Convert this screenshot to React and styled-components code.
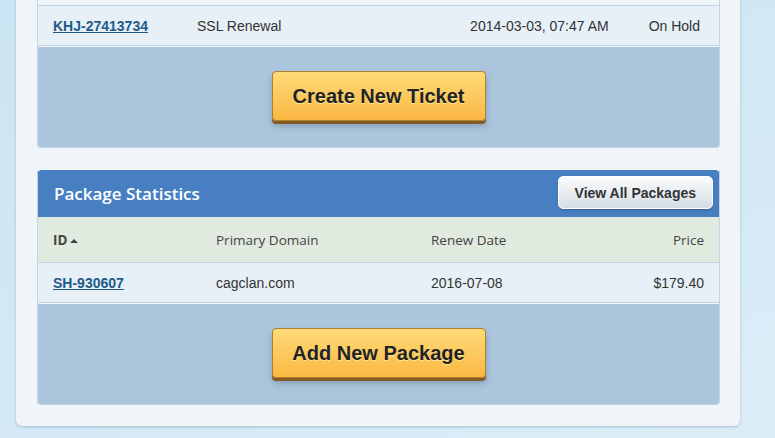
import React from 'react'
import styled, { createGlobalStyle } from 'styled-components'

const GlobalStyle = createGlobalStyle`
  body {
    margin: 0;
    overflow: hidden;
    background: linear-gradient(160deg, #cce5f3 0%, #d4e9f5 60%, #dcedf7 100%);
    font-family: "Liberation Sans", Arial, sans-serif;
  }
`

const Page = styled.div`
  width: 775px;
  height: 438px;
  overflow: hidden;
`

const Panel = styled.div`
  width: 724px;
  margin: -34px 0 0 16px;
  padding: 0 20px 21px 21px;
  box-sizing: border-box;
  background: #f0f5fa;
  border-radius: 0 0 6px 6px;
  box-shadow: 0 1px 3px rgba(70, 110, 150, 0.35);
  display: flex;
  flex-direction: column;
  gap: 22px;
`

const Box = styled.div`
  border: 1px solid #c3d3e6;
  border-top: 0;
  border-radius: 0 0 4px 4px;
  overflow: hidden;
  background: #e6f0f6;
`

const Header = styled.div`
  height: 47px;
  margin: 0 -1px;
  padding: 0 7px 0 17px;
  background: #477fc2;
  border-radius: 5px 5px 0 0;
  display: flex;
  align-items: center;
  justify-content: space-between;
`

const Title = styled.div`
  font-family: "Open Sans", sans-serif;
  font-weight: 600;
  font-size: 17px;
  color: #fff;
  margin-top: -1px;
`

const GreyButton = styled.button`
  height: 33px;
  margin-top: -2px;
  padding: 0 16px;
  border: 1px solid #fff;
  border-radius: 5px;
  background: linear-gradient(#fbfcfd, #d5dde4);
  box-shadow: 0 1px 2px rgba(0, 0, 0, 0.25);
  font-family: "Liberation Sans", Arial, sans-serif;
  font-weight: bold;
  font-size: 14px;
  color: #333;
`

const Row = styled.div`
  display: grid;
  grid-template-columns: ${p => p.$cols};
  align-items: center;
  box-sizing: border-box;
  height: ${p => p.$h || 40}px;
  padding: 0 15px;
  background: ${p => (p.$head ? '#e0eadf' : p.$faint ? '#eef4f8' : '#e6f0f6')};
  border-bottom: 1px solid #c3d3e6;
  font-size: 14px;
  color: #333;
`

const HeadCell = styled.div`
  font-family: "Open Sans", sans-serif;
  font-size: 13.5px;
  color: #444;
  text-align: ${p => (p.$right ? 'right' : 'left')};
  font-weight: ${p => (p.$bold ? 700 : 400)};
`

const Cell = styled.div`
  text-align: ${p => (p.$right ? 'right' : 'left')};
  white-space: nowrap;
`

const Status = styled(Cell)`
  padding: 0 4px 0 40px;
`

const Link = styled.a`
  font-weight: bold;
  color: #1f5a87;
  text-decoration: underline;
`

const Footer = styled.div`
  box-sizing: border-box;
  height: 101px;
  background: #abc6dc;
  border-top: 1px solid #f3f7fb;
  display: flex;
  justify-content: center;
  padding-top: 24px;
`

const YellowButton = styled.button`
  width: 214px;
  height: 50px;
  border: 1px solid #b17d2e;
  border-radius: 4px;
  background: linear-gradient(#fddb78, #fbb843);
  box-shadow: 0 3px 0 #855b25, 0 5px 7px rgba(40, 60, 90, 0.3);
  font-family: "Liberation Sans", Arial, sans-serif;
  font-weight: bold;
  font-size: 20px;
  color: #222;
  text-shadow: 0 1px 0 rgba(255, 240, 170, 0.8);
`

const Caret = styled.span`
  display: inline-block;
  margin-left: 3px;
  vertical-align: 2px;
  border-left: 4px solid transparent;
  border-right: 4px solid transparent;
  border-bottom: 4px solid #444;
`

export default function App() {
  return (
    <Page>
      <GlobalStyle />
      <Panel>
        <Box>
          <Row $cols="144px 1fr auto auto" $faint />
          <Row $cols="144px 1fr auto auto">
            <Cell><Link>KHJ-27413734</Link></Cell>
            <Cell>SSL Renewal</Cell>
            <Cell>2014-03-03, 07:47 AM</Cell>
            <Status>On Hold</Status>
          </Row>
          <Footer>
            <YellowButton>Create New Ticket</YellowButton>
          </Footer>
        </Box>
        <Box>
          <Header>
            <Title>Package Statistics</Title>
            <GreyButton>View All Packages</GreyButton>
          </Header>
          <Row $cols="163px 215px 1fr auto" $h={46} $head>
            <HeadCell $bold>ID<Caret /></HeadCell>
            <HeadCell>Primary Domain</HeadCell>
            <HeadCell>Renew Date</HeadCell>
            <HeadCell $right>Price</HeadCell>
          </Row>
          <Row $cols="163px 215px 1fr auto">
            <Cell><Link>SH-930607</Link></Cell>
            <Cell>cagclan.com</Cell>
            <Cell>2016-07-08</Cell>
            <Cell $right>$179.40</Cell>
          </Row>
          <Footer>
            <YellowButton>Add New Package</YellowButton>
          </Footer>
        </Box>
      </Panel>
    </Page>
  )
}
